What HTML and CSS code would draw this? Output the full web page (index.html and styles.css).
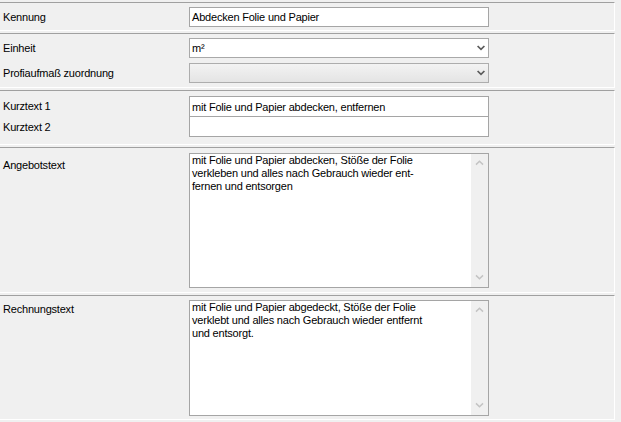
FILE: index.html
```html
<!DOCTYPE html>
<html lang="de">
<head>
<meta charset="utf-8">
<title>Position</title>
<link rel="stylesheet" href="styles.css">
</head>
<body>
<div class="form">
  <div class="section s1">
    <div class="label">Kennung</div>
    <div class="input">Abdecken Folie und Papier</div>
  </div>

  <div class="section s2">
    <div class="label">Einheit</div>
    <div class="select">
      <span>m²</span>
      <svg class="chev" width="8" height="6" viewBox="0 0 8 6"><path d="M0.6 1 L4 4.4 L7.4 1" fill="none" stroke="#5a5a5a" stroke-width="1.7"/></svg>
    </div>
    <div class="label">Profiaufmaß zuordnung</div>
    <div class="select disabled">
      <span></span>
      <svg class="chev" width="8" height="6" viewBox="0 0 8 6"><path d="M0.6 1 L4 4.4 L7.4 1" fill="none" stroke="#5a5a5a" stroke-width="1.7"/></svg>
    </div>
  </div>

  <div class="section s3">
    <div class="label">Kurztext 1</div>
    <div class="input first">mit Folie und Papier abdecken, entfernen</div>
    <div class="label">Kurztext 2</div>
    <div class="input joined"></div>
  </div>

  <div class="section s4">
    <div class="label label-top l4">Angebotstext</div>
    <div class="memo m4">
      <div class="memo-text">mit Folie und Papier abdecken, Stöße der Folie<br>verkleben und alles nach Gebrauch wieder ent-<br>fernen und entsorgen</div>
      <div class="scroll">
        <svg width="9" height="6" viewBox="0 0 9 6"><path d="M1 4.6 L4.5 1.2 L8 4.6" fill="none" stroke="#c4c4c4" stroke-width="1.5"/></svg>
        <svg width="9" height="6" viewBox="0 0 9 6"><path d="M1 1.4 L4.5 4.8 L8 1.4" fill="none" stroke="#c4c4c4" stroke-width="1.5"/></svg>
      </div>
    </div>
  </div>

  <div class="section s5">
    <div class="label label-top l5">Rechnungstext</div>
    <div class="memo m5">
      <div class="memo-text">mit Folie und Papier abgedeckt, Stöße der Folie<br>verklebt und alles nach Gebrauch wieder entfernt<br>und entsorgt.</div>
      <div class="scroll">
        <svg width="9" height="6" viewBox="0 0 9 6"><path d="M1 4.6 L4.5 1.2 L8 4.6" fill="none" stroke="#c4c4c4" stroke-width="1.5"/></svg>
        <svg width="9" height="6" viewBox="0 0 9 6"><path d="M1 1.4 L4.5 4.8 L8 1.4" fill="none" stroke="#c4c4c4" stroke-width="1.5"/></svg>
      </div>
    </div>
  </div>
</div>
</body>
</html>
```

FILE: styles.css
```css
* { box-sizing: border-box; }

html, body {
  margin: 0;
  padding: 0;
  background: #f0f0f0;
}

body {
  padding-top: 2px;
  font-family: "Liberation Sans", Arial, sans-serif;
  font-size: 11px;
  letter-spacing: -0.2px;
  color: #000;
}

.form {
  width: 615px;
  display: flex;
  flex-direction: column;
  gap: 2px;
}

.section {
  display: grid;
  grid-template-columns: 186px 300px;
  align-items: center;
  border-top: 1px solid #a0a0a0;
  border-bottom: 1px solid #ffffff;
  border-right: 1px solid #ffffff;
  padding-left: 3px;
}

.s1 { padding-top: 4px; padding-bottom: 3px; }
.s2 { padding-top: 4px; padding-bottom: 4px; row-gap: 5px; }
.s3 { padding-top: 5px; padding-bottom: 7px; }
.s4 { padding-top: 5px; padding-bottom: 4px; align-items: start; }
.s5 { padding-top: 4px; padding-bottom: 3px; align-items: start; }

.label {
  line-height: 13px;
  white-space: nowrap;
}

.l4 { margin-top: 6px; }
.l5 { margin-top: 3px; }

.input {
  height: 20px;
  border: 1px solid #a5a5a5;
  background: #fff;
  padding: 0 2px;
  display: flex;
  align-items: center;
  white-space: nowrap;
}

.input.first { height: 21px; }
.input.joined { border-top: none; }

.select {
  height: 20px;
  border: 1px solid #a9a9a9;
  background: #fff;
  padding: 0 3px 0 2px;
  display: flex;
  align-items: center;
  justify-content: space-between;
}

.select.disabled {
  background: linear-gradient(#f3f3f3, #e4e4e4);
  border-color: #adadad;
}

.chev { display: block; }

.memo {
  border: 1px solid #a5a5a5;
  background: #fff;
  display: flex;
}

.m4 { height: 135px; }
.m5 { height: 116px; }

.memo-text {
  flex: 1;
  padding: 0 2px;
  line-height: 13px;
}

.scroll {
  width: 17px;
  background: #f0f0f0;
  display: flex;
  flex-direction: column;
  justify-content: space-between;
  align-items: center;
  padding: 6px 0 7px;
}

.scroll svg { display: block; }
```
